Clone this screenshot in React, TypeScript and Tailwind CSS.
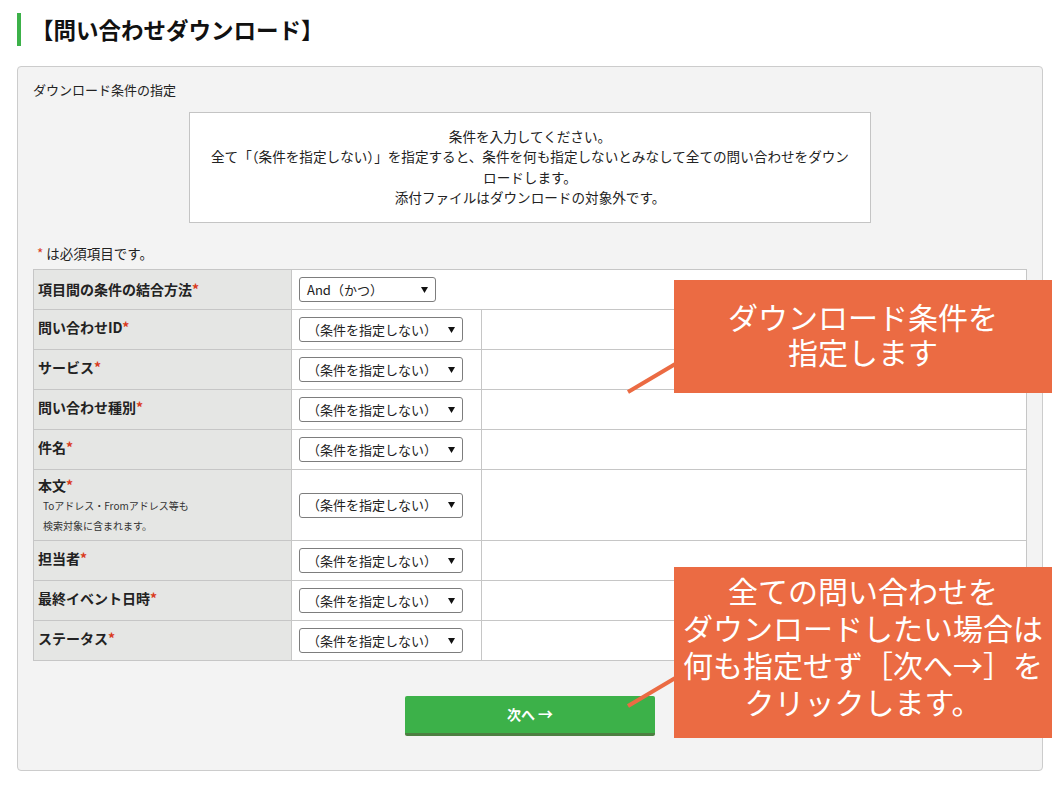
import React from "react";

type Row = { label: string; note?: boolean };

const rows: Row[] = [
  { label: "問い合わせID" },
  { label: "サービス" },
  { label: "問い合わせ種別" },
  { label: "件名" },
  { label: "本文", note: true },
  { label: "担当者" },
  { label: "最終イベント日時" },
  { label: "ステータス" },
];

const Caret = () => (
  <svg width="7" height="6" viewBox="0 0 7 6" className="shrink-0">
    <polygon points="0,0 7,0 3.5,6" fill="#111" />
  </svg>
);

const FakeSelect = ({ text, wide }: { text: string; wide?: boolean }) => (
  <div
    className={`flex h-[25px] items-center justify-between rounded-[3px] border border-[#7d7d7d] bg-white pl-[7px] pr-[7px] text-[13px] text-[#222] ${
      wide ? "w-[164px]" : "w-[137px]"
    }`}
  >
    <span className="whitespace-nowrap">{text}</span>
    <Caret />
  </div>
);

const Req = () => <span className="text-[#d93a1c]">*</span>;

export default function App() {
  return (
    <div className="relative h-[792px] w-[1063px] overflow-hidden bg-white font-['Noto_Sans_CJK_JP',sans-serif] text-[#222]">
      {/* page heading */}
      <div className="flex items-center pt-[13px]">
        <div className="ml-[17px] h-[33px] w-[4px] bg-[#3cb149]" />
        <h1 className="ml-[10px] text-[22.5px] font-bold leading-[33px] text-[#111]">【問い合わせダウンロード】</h1>
      </div>

      {/* panel */}
      <div className="ml-[17px] mt-[20px] w-[1026px] rounded-[4px] border border-[#cccccc] bg-[#f3f3f3] px-[15px] pb-[34px] pt-[13px]">
        <p className="text-[13px] leading-[20px]">ダウンロード条件の指定</p>

        <div className="mx-auto mt-[12px] h-[111px] w-[682px] border border-[#c4c4c4] bg-white pt-[13px] text-center text-[13.6px] leading-[20.3px]">
          条件を入力してください。
          <br />
          全て「（条件を指定しない）」を指定すると、条件を何も指定しないとみなして全ての問い合わせをダウン
          <br />
          ロードします。
          <br />
          添付ファイルはダウンロードの対象外です。
        </div>

        <p className="ml-[4px] mt-[20px] text-[13.5px] leading-[20px]">
          <Req /> は必須項目です。
        </p>

        <div className="mt-[6px] grid grid-cols-[258px_190px_1fr] border-l border-t border-[#c6c6c6]">
          <div className="flex h-[40px] items-center border-b border-r border-[#c6c6c6] bg-[#e5e6e4] pb-[2px] pl-[4px] text-[14px] font-bold leading-[20px]">
            <span>
              項目間の条件の結合方法
              <Req />
            </span>
          </div>
          <div className="col-span-2 flex h-[40px] items-center border-b border-r border-[#c6c6c6] bg-white pl-[7px]">
            <FakeSelect text="And（かつ）" />
          </div>

          {rows.map((row) => (
            <React.Fragment key={row.label}>
              <div
                className={`flex flex-col justify-center border-b border-r border-[#c6c6c6] bg-[#e5e6e4] pl-[4px] ${
                  row.note ? "h-[71px]" : "h-[40px] pb-[6px]"
                }`}
              >
                <span className="text-[14px] font-bold leading-[20px]">
                  {row.label}
                  <Req />
                </span>
                {row.note && (
                  <div className="mt-[1px] pl-[5px] text-[10px] leading-[20px] text-[#333]">
                    <div>Toアドレス・Fromアドレス等も</div>
                    <div>検索対象に含まれます。</div>
                  </div>
                )}
              </div>
              <div
                className={`flex items-center border-b border-r border-[#c6c6c6] bg-white pl-[7px] ${
                  row.note ? "h-[71px]" : "h-[40px]"
                }`}
              >
                <FakeSelect text="（条件を指定しない）" wide />
              </div>
              <div className={`border-b border-r border-[#c6c6c6] bg-white ${row.note ? "h-[71px]" : "h-[40px]"}`} />
            </React.Fragment>
          ))}
        </div>

        <div className="mt-[35px] flex justify-center">
          <button className="h-[40px] w-[250px] rounded-[2px] border-b-[3px] border-[#4d7f42] bg-[#3cb149] text-[14px] font-bold text-white">
            次へ <span className="text-[15px]">→</span>
          </button>
        </div>
      </div>

      {/* callout pointers */}
      <svg className="pointer-events-none absolute left-0 top-0" width="1063" height="792">
        <line x1="628" y1="392" x2="677" y2="363" stroke="#eb6b43" strokeWidth="4" />
        <line x1="628" y1="706" x2="677" y2="677" stroke="#eb6b43" strokeWidth="4" />
      </svg>

      <div className="absolute left-[674px] top-[280px] h-[113px] w-[378px] whitespace-nowrap bg-[#eb6b43] pt-[19px] text-center text-[30px] leading-[35px] text-white">
        ダウンロード条件を
        <br />
        指定します
      </div>

      <div className="absolute left-[674px] top-[567px] h-[171px] w-[378px] whitespace-nowrap bg-[#eb6b43] pt-[5px] text-center text-[30px] leading-[37px] text-white">
        全ての問い合わせを
        <br />
        ダウンロードしたい場合は
        <br />
        何も指定せず［次へ→］を
        <br />
        クリックします。
      </div>
    </div>
  );
}
